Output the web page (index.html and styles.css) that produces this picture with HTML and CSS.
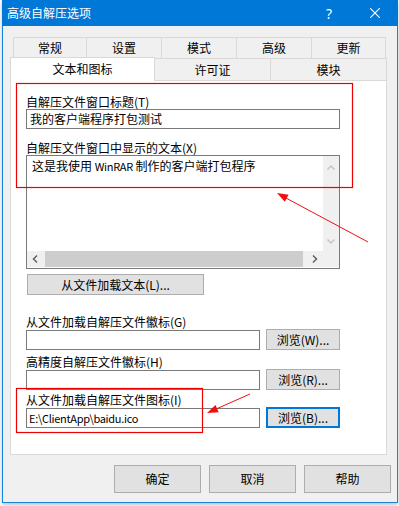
FILE: index.html
```html
<!DOCTYPE html>
<html lang="zh-CN">
<head>
    <meta charset="UTF-8">
    <title>高级自解压选项</title>
    <link rel="stylesheet" href="styles.css">
</head>
<body>
    <div class="window">
        <div class="titlebar">
            <span class="title">高级自解压选项</span>
            <span class="caption-btn help">?</span>
            <span class="caption-btn close">
                <svg width="10" height="10" viewBox="0 0 10 10"><path d="M0 0L10 10M10 0L0 10" stroke="#fff" stroke-width="1.1"/></svg>
            </span>
        </div>

        <div class="tabs">
            <div class="tab-row upper">
                <div class="tab w73">常规</div>
                <div class="tab w75">设置</div>
                <div class="tab w75">模式</div>
                <div class="tab w75">高级</div>
                <div class="tab w75 last">更新</div>
            </div>
            <div class="tab-row lower">
                <div class="tab active">文本和图标</div>
                <div class="tab w115">许可证</div>
                <div class="tab w117">模块</div>
            </div>
        </div>

        <div class="panel">
            <label class="caption">自解压文件窗口标题(T)</label>
            <div class="field">我的客户端程序打包测试</div>

            <label class="caption gap-11">自解压文件窗口中显示的文本(X)</label>
            <div class="memo">
                <div class="memo-text">这是我使用 <span class="latin">WinRAR</span> 制作的客户端打包程序</div>
                <div class="vscroll">
                    <svg width="16" height="95" viewBox="0 0 16 95">
                        <path d="M4.5 13.5L8 10L11.5 13.5" fill="none" stroke="#c4c4c4" stroke-width="1.5"/>
                        <path d="M4.5 83.5L8 87L11.5 83.5" fill="none" stroke="#c4c4c4" stroke-width="1.5"/>
                    </svg>
                </div>
                <div class="hscroll">
                    <svg class="arrow-l" width="16" height="16" viewBox="0 0 16 16"><path d="M10 4.5L6.5 8L10 11.5" fill="none" stroke="#606060" stroke-width="1.5"/></svg>
                    <div class="thumb"></div>
                    <svg class="arrow-r" width="16" height="16" viewBox="0 0 16 16"><path d="M6 4.5L9.5 8L6 11.5" fill="none" stroke="#606060" stroke-width="1.5"/></svg>
                </div>
                <div class="corner"></div>
            </div>

            <button class="btn load-text">从文件加载文本(L)...</button>

            <label class="caption gap-19">从文件加载自解压文件徽标(G)</label>
            <div class="browse-row">
                <div class="field short"></div>
                <button class="btn browse">浏览(W)...</button>
            </div>

            <label class="caption gap-4">高精度自解压文件徽标(H)</label>
            <div class="browse-row">
                <div class="field short"></div>
                <button class="btn browse">浏览(R)...</button>
            </div>

            <label class="caption gap-2">从文件加载自解压文件图标(I)</label>
            <div class="browse-row">
                <div class="field short"><span class="latin">E:\ClientApp\baidu.ico</span></div>
                <button class="btn browse focused">浏览(B)...</button>
            </div>
        </div>

        <div class="dialog-buttons">
            <button class="btn dlg">确定</button>
            <button class="btn dlg">取消</button>
            <button class="btn dlg">帮助</button>
        </div>
    </div>

    <!-- red annotation marks drawn over the screenshot -->
    <svg class="marks" width="399" height="506" viewBox="0 0 399 506">
        <rect x="16.5" y="83.5" width="336" height="104" fill="none" stroke="#ee0000" stroke-width="1.2"/>
        <rect x="16.5" y="388.5" width="186" height="44" fill="none" stroke="#ee0000" stroke-width="1.2"/>
        <line x1="368" y1="242" x2="285" y2="197.5" stroke="#ee1010" stroke-width="1"/>
        <polygon points="277,193 288.6,194.7 284.8,201.7" fill="#ee1010"/>
        <line x1="250" y1="394" x2="215" y2="409.5" stroke="#ee1010" stroke-width="1"/>
        <polygon points="207,413 218.7,412.2 215.5,404.9" fill="#ee1010"/>
    </svg>
</body>
</html>
```

FILE: styles.css
```css
:root {
    --accent: #0078d7;
    --face: #f0f0f0;
    --tab-line: #d9d9d9;
    --field-line: #7a7a7a;
    --btn-face: #e1e1e1;
    --btn-line: #adadad;
}

body {
    margin: 0;
    width: 399px;
    height: 506px;
    overflow: hidden;
    background: #fff;
    font-family: "Noto Sans CJK SC", "Noto Sans", sans-serif;
    font-size: 12px;
    color: #000;
    position: relative;
}

.window {
    margin-left: 2px;
    width: 396px;
    height: 503px;
    box-sizing: border-box;
    border: 1px solid #1883d7;
    border-top: none;
    background: var(--face);
    box-shadow: 0 2px 4px rgba(0, 0, 0, 0.25);
}

.titlebar {
    height: 26px;
    margin: 0 -1px;
    background: var(--accent);
    color: #fff;
    display: flex;
    align-items: center;
    padding-left: 5px;
}

.title {
    flex: 1;
    line-height: 26px;
}

.caption-btn {
    width: 46px;
    height: 26px;
    display: flex;
    align-items: center;
    justify-content: center;
}

.help {
    font-size: 14px;
    font-family: "Noto Sans", sans-serif;
}

/* tabs */
.tabs {
    margin: 11px 0 0 7px;
    width: 377px;
}

.tab-row {
    display: flex;
}

.tab-row.upper {
    padding-left: 3px;
    height: 21px;
}

.tab-row.lower {
    height: 22px;
}

.tab {
    box-sizing: border-box;
    border-top: 1px solid var(--tab-line);
    border-left: 1px solid var(--tab-line);
    text-align: center;
    line-height: 20px;
    background: var(--face);
}

.tab.last {
    border-right: 1px solid var(--tab-line);
}

.w73 { width: 73px; }
.w75 { width: 75px; }
.w115 { width: 115px; }
.w117 { width: 117px; border-right: 1px solid var(--tab-line); }

.tab-row.lower .tab {
    line-height: 22px;
}

.tab.active {
    width: 145px;
    margin: -1px 0 -1px 0;
    border: 1px solid var(--tab-line);
    border-bottom: none;
    background: #fff;
    position: relative;
    z-index: 1;
    line-height: 21px;
}

.tab.active + .tab {
    border-left: none;
}

/* panel */
.panel {
    margin-left: 7px;
    width: 377px;
    height: 375px;
    box-sizing: border-box;
    border: 1px solid var(--tab-line);
    background: #fff;
    padding: 13px 0 0 15px;
}

.caption {
    display: block;
    line-height: 15px;
    white-space: nowrap;
}

.gap-11 { margin-top: 11px; }
.gap-19 { margin-top: 19px; }
.gap-4 { margin-top: 4px; }
.gap-2 { margin-top: 2px; }

.latin {
    font-size: 11px;
    letter-spacing: -0.3px;
}

.field {
    width: 314px;
    height: 20px;
    box-sizing: border-box;
    border: 1px solid var(--field-line);
    background: #fff;
    padding-left: 3px;
    line-height: 18px;
    white-space: nowrap;
}

.field.short {
    width: 234px;
    margin-top: 1px;
    padding-left: 2px;
}

.memo {
    width: 314px;
    height: 114px;
    box-sizing: border-box;
    border: 1px solid var(--field-line);
    padding-bottom: 1px;
    display: grid;
    grid-template-columns: 1fr 16px;
    grid-template-rows: 1fr 16px;
}

.memo-text {
    padding: 2px 0 0 5px;
    line-height: 16px;
    white-space: nowrap;
}

.vscroll {
    background: var(--face);
}

.vscroll svg {
    display: block;
}

.hscroll {
    background: var(--face);
    display: flex;
    align-items: center;
}

.hscroll svg {
    display: block;
    flex: none;
}

.thumb {
    margin-left: 2px;
    width: 258px;
    height: 16px;
    background: #cdcdcd;
}

.arrow-r {
    margin-left: 4px;
}

.corner {
    background: var(--face);
}

/* buttons */
.btn {
    font: inherit;
    color: #000;
    background: var(--btn-face);
    border: 1px solid var(--btn-line);
    box-sizing: border-box;
    padding: 0;
    line-height: 19px;
    display: block;
}

.load-text {
    margin: 5px 0 0 1px;
    width: 177px;
    height: 21px;
}

.browse-row {
    display: flex;
    align-items: flex-start;
    gap: 6px;
}

.browse {
    width: 74px;
    height: 21px;
}

.browse.focused {
    border: 2px solid var(--accent);
    line-height: 17px;
}

.dialog-buttons {
    display: flex;
    justify-content: flex-end;
    gap: 8px;
    padding-right: 6px;
    margin-top: 10px;
}

.dlg {
    width: 87px;
    height: 28px;
    line-height: 26px;
}

.marks {
    position: absolute;
    left: 0;
    top: 0;
    pointer-events: none;
}
```
